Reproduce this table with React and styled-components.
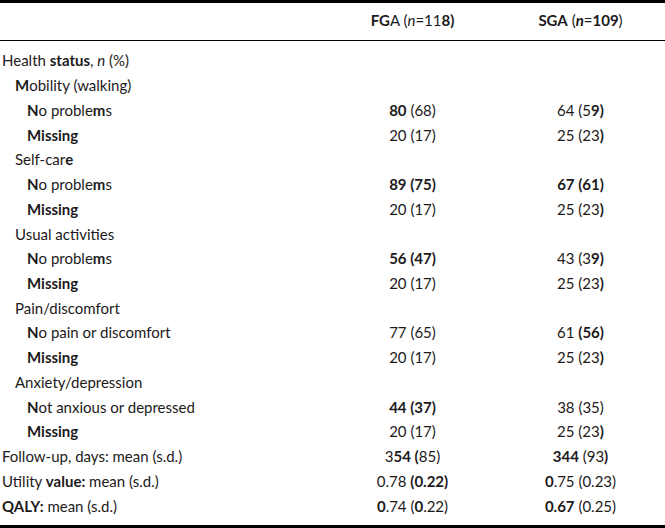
import React from "react";
import styled, { createGlobalStyle } from "styled-components";

const Global = createGlobalStyle`
  html, body { margin: 0; padding: 0; background: #fff; }
  body { font-family: Lato, "Open Sans", sans-serif; color: #1c1a1b; }
`;

const Table = styled.div`
  width: 665px;
  border-top: 3px solid #000;
  border-bottom: 3px solid #000;
  box-sizing: border-box;
  height: 528px;
  display: flex;
  flex-direction: column;
`;

const HeadRow = styled.div`
  display: grid;
  grid-template-columns: 329px 167px 1fr;
  flex: 0 0 38px;
  border-bottom: 1px solid #000;
  font-size: 15px;
  line-height: 18px;
  align-items: center;
  padding-bottom: 3px;
  box-sizing: border-box;
`;

const Body = styled.div`
  flex: 1;
  padding: 7px 0 7px;
  display: flex;
  flex-direction: column;
`;

const Row = styled.div`
  flex: 1;
  display: grid;
  grid-template-columns: 329px 167px 1fr;
  align-items: center;
  font-size: 15px;
  line-height: 18px;
  white-space: nowrap;
`;

const Label = styled.div`
  padding-left: ${(p) => [2, 15, 27][p.$indent || 0]}px;
`;

const Cell = styled.div`
  text-align: center;
`;

const B = styled.b`
  font-weight: 700;
`;

const I = styled.i`
  font-style: italic;
`;

const rows = [
  { indent: 0, label: <>Health <B>status</B>, <I>n</I> (%)</> },
  { indent: 1, label: <><B>M</B>obility (walking)</> },
  { indent: 2, label: <><B>N</B>o proble<B>m</B>s</>, a: <><B>80</B> (68)</>, b: <>64 (5<B>9)</B></> },
  { indent: 2, label: <B>Missing</B>, a: <>20 (17)</>, b: <>25 (23<B>)</B></> },
  { indent: 1, label: <>Self-car<B>e</B></> },
  { indent: 2, label: <><B>N</B>o proble<B>m</B>s</>, a: <B>89 (75)</B>, b: <B>67 (61)</B> },
  { indent: 2, label: <B>Missing</B>, a: <>20 (17)</>, b: <>25 (23<B>)</B></> },
  { indent: 1, label: <>Usual activities</> },
  { indent: 2, label: <><B>N</B>o proble<B>m</B>s</>, a: <B>56 (47)</B>, b: <>43 (3<B>9)</B></> },
  { indent: 2, label: <B>Missing</B>, a: <>20 (17)</>, b: <>25 (23<B>)</B></> },
  { indent: 1, label: <>Pain/discomfort</> },
  { indent: 2, label: <><B>N</B>o pain or discomfort</>, a: <>77 (65)</>, b: <>61 <B>(56)</B></> },
  { indent: 2, label: <B>Missing</B>, a: <>20 (17)</>, b: <>25 (23<B>)</B></> },
  { indent: 1, label: <>Anxiety/depression</> },
  { indent: 2, label: <><B>N</B>ot anxious or depressed</>, a: <B>44 (37)</B>, b: <>38 (35)</> },
  { indent: 2, label: <B>Missing</B>, a: <>20 (17)</>, b: <>25 (23<B>)</B></> },
  { indent: 0, label: <>Follow-up, days: mean (s.d.)</>, a: <>3<B>54 (</B>85)</>, b: <><B>344</B> (93<B>)</B></> },
  { indent: 0, label: <>Utility <B>value:</B> mean (s.d.)</>, a: <>0.78 <B>(0.22)</B></>, b: <><B>0</B>.75 (0.23)</> },
  { indent: 0, label: <><B>QALY:</B> mean (s.d.)</>, a: <><B>0</B>.74 (<B>0</B>.22)</>, b: <><B>0.67</B> (0.25)</> },
];

export default function App() {
  return (
    <>
      <Global />
      <Table>
        <HeadRow>
          <div />
          <Cell><B>FG</B>A (<I>n</I>=11<B>8)</B></Cell>
          <Cell><B>SGA</B> (<B><I>n</I></B>=<B>109</B>)</Cell>
        </HeadRow>
        <Body>
          {rows.map((r, i) => (
            <Row key={i}>
              <Label $indent={r.indent}>{r.label}</Label>
              <Cell>{r.a}</Cell>
              <Cell>{r.b}</Cell>
            </Row>
          ))}
        </Body>
      </Table>
    </>
  );
}
